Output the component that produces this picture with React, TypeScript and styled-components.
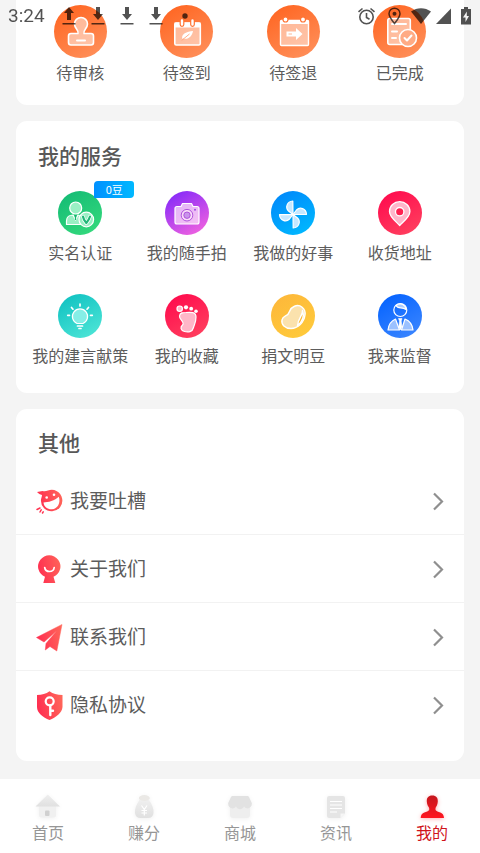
import React from "react";
import styled, { createGlobalStyle, css } from "styled-components";

const GlobalStyle = createGlobalStyle`
  *, *::before, *::after { box-sizing: border-box; }
  body {
    margin: 0;
    background: #f4f4f4;
    color: #5c5c5c;
    font-family: "Noto Sans CJK SC", "Noto Sans", sans-serif;
  }
  button { font: inherit; color: inherit; border: 0; background: none; padding: 0; cursor: pointer; }
  a { color: inherit; text-decoration: none; }
  svg { display: block; }
`;

const Page = styled.div`
  display: flex;
  flex-direction: column;
  min-height: 100vh;
`;

const StatusBar = styled.div`
  position: fixed;
  inset: 0 0 auto 0;
  z-index: 2;
  display: flex;
  justify-content: space-between;
  align-items: center;
  height: 32px;
  padding: 0 4px 0 8px;
  color: rgba(0, 0, 0, 0.68);
  pointer-events: none;
`;

const StatusGroup = styled.div<{ $gap: number }>`
  display: flex;
  align-items: center;
  gap: ${(p) => p.$gap}px;
`;

const Clock = styled.time`
  font: 400 19px/32px Roboto, sans-serif;
  margin-right: 2px;
`;

const Main = styled.main`
  flex: 1;
  display: flex;
  flex-direction: column;
  gap: 16px;
  padding: 0 16px 16px;
`;

const Card = styled.section<{ $variant: "status" | "service" | "list" }>`
  background: #fff;
  border-radius: 11px;
  ${(p) =>
    p.$variant === "status" &&
    css`
      padding: 5px 11px 21px;
      border-top-left-radius: 0;
      border-top-right-radius: 0;
    `}
  ${(p) =>
    p.$variant === "service" &&
    css`
      padding: 18px 11px 26px;
    `}
  ${(p) =>
    p.$variant === "list" &&
    css`
      padding: 17px 0 23px;
    `}
`;

const CardTitle = styled.h2<{ $inset: number }>`
  margin: 0 0 0 ${(p) => p.$inset}px;
  font-size: 21px;
  line-height: 32px;
  font-weight: 500;
  color: #585858;
`;

const TileGrid = styled.div<{ $top?: number }>`
  display: grid;
  grid-template-columns: repeat(4, minmax(0, 1fr));
  row-gap: 30px;
  margin-top: ${(p) => p.$top ?? 0}px;
`;

const Tile = styled.button<{ $gap: number }>`
  display: flex;
  flex-direction: column;
  align-items: center;
  gap: ${(p) => p.$gap}px;
  font-size: 16px;
  line-height: 24px;
  white-space: nowrap;
`;

const Disc = styled.span<{ $size: number; $from: string; $to: string }>`
  position: relative;
  width: ${(p) => p.$size}px;
  height: ${(p) => p.$size}px;
  border-radius: 50%;
  background: linear-gradient(150deg, ${(p) => p.$from}, ${(p) => p.$to});
`;

const Badge = styled.span`
  position: absolute;
  left: 36px;
  top: -10px;
  width: 40px;
  border-radius: 4px 3px 4px 0;
  background: linear-gradient(90deg, #0090ff, #00b8ff);
  color: #fff;
  font-size: 11px;
  line-height: 17px;
  text-align: center;
`;

const List = styled.ul`
  list-style: none;
  margin: 9px 0 0;
  padding: 0;
`;

const ListItem = styled.li`
  & + & {
    border-top: 1px solid #f2f2f2;
  }
`;

const ListButton = styled.button`
  display: flex;
  align-items: center;
  gap: 6px;
  width: 100%;
  height: 67px;
  padding: 0 20px;
  font-size: 19px;
  line-height: 28px;
  text-align: left;
`;

const ListLabel = styled.span`
  flex: 1;
  padding-bottom: 2px;
`;

const TabBar = styled.nav`
  position: sticky;
  bottom: 0;
  display: grid;
  grid-template-columns: repeat(5, 1fr);
  padding: 13px 0 9px;
  background: #fff;
`;

const Tab = styled.a<{ $active?: boolean }>`
  display: flex;
  flex-direction: column;
  align-items: center;
  font-size: 16px;
  line-height: 24px;
  color: ${(p) => (p.$active ? "#d0131b" : "#969696")};
`;

const TabIcon = styled.svg<{ $active?: boolean }>`
  width: 28px;
  height: 28px;
  overflow: visible;
  filter: drop-shadow(0 1px 2px ${(p) => (p.$active ? "rgba(255,30,40,.35)" : "rgba(0,0,0,.06)")});
`;

const soft = "rgba(255,255,255,.5)";

const tileArt: Record<string, React.ReactNode> = {
  stamp: (
    <g fill={soft} stroke="#fff" strokeWidth="1.6" strokeLinejoin="round">
      <path d="M24 28.500C25 25 20.500 23.500 20.500 19A6.500 6.500 0 0 1 33.500 19C33.500 23.500 29 25 30 28.500H37Q39.500 28.500 39.500 31V37.500Q39.500 40 37 40H17Q14.500 40 14.500 37.500V31Q14.500 28.500 17 28.500Z" />
      <path d="M23 35.500H31" strokeWidth="2" strokeLinecap="round" />
    </g>
  ),
  leaf: (
    <g>
      <rect x="14.800" y="18" width="25.500" height="22" rx="1.500" fill={soft} stroke="#fff" strokeWidth="1.600" />
      <path d="M14.500 17.500H40.500V22.500H14.500Z" fill="#fff" />
      <path d="M22 15.500V19.500M32.500 15.500V19.500" stroke="#ff7332" strokeWidth="4.800" strokeLinecap="round" />
      <path d="M22 15.500V19.500M32.500 15.500V19.500" stroke="#fff" strokeWidth="2.400" strokeLinecap="round" />
      <path d="M22.500 34C20.500 29 27 26.500 33 26C32 31.500 28 35 23.500 33.500L21 36" fill="#fff" />
      <path d="M21.500 35.500L29.500 29" stroke="#ff9a6c" strokeWidth=".8" />
    </g>
  ),
  exit: (
    <g>
      <rect x="13.500" y="15.500" width="28" height="25" rx="1" fill={soft} stroke="#fff" strokeWidth="1.400" />
      <path d="M13.500 15.500H41.500V19H13.500Z" fill="#fff" />
      <circle cx="18.500" cy="14.500" r="2.500" fill="#fff" stroke="#ff7332" strokeWidth="1.200" />
      <circle cx="36" cy="14.500" r="2.500" fill="#fff" stroke="#ff7332" strokeWidth="1.200" />
      <path d="M19.500 26.500H29V23L35.500 29L29 35V31.500H19.500Z" fill="#fff" />
      <path d="M21.500 29H25" stroke="#ffb896" strokeWidth="1" />
    </g>
  ),
  done: (
    <g stroke="#fff" strokeLinecap="round" strokeLinejoin="round" fill="none">
      <rect x="14.800" y="13.500" width="22.500" height="26" rx="2" fill={soft} strokeWidth="1.600" />
      <path d="M19 19H33M19 26.500H24M19 33H23" strokeWidth="2" />
      <circle cx="35" cy="33" r="8.500" fill="#ffab85" strokeWidth="1.600" />
      <path d="M31.500 33L34 35.500L38.500 30.500" strokeWidth="2" />
    </g>
  ),
  verify: (
    <g fill="#9af0c4" stroke="#fff" strokeWidth="1.200" strokeLinejoin="round">
      <circle cx="17.700" cy="17" r="6" />
      <path d="M8.500 33.500V30C8.500 26 11.500 24 15 24L17.500 29L20 24C24 24 26 27 26 33.500Z" />
      <path d="M17.500 24V29" stroke="#15b56e" />
      <circle cx="28.300" cy="28.500" r="7.300" />
      <path d="M25 25.500Q25.500 29 28.300 32Q31 29 32 25.500" fill="none" stroke="#fff" strokeWidth="3.600" strokeLinecap="round" />
      <path d="M25 25.500Q25.500 29 28.300 32Q31 29 32 25.500" fill="none" stroke="#20b878" strokeWidth="2.200" strokeLinecap="round" />
    </g>
  ),
  camera: (
    <g fill="rgba(255,235,250,.7)" stroke="#fff" strokeWidth="1.200" strokeLinejoin="round">
      <path d="M12 15.500H16L17.500 12.500H26.500L28 15.500H32Q34 15.500 34 17.500V31Q34 33 32 33H12Q10 33 10 31V17.500Q10 15.500 12 15.500Z" />
      <circle cx="22" cy="24.200" r="5.800" stroke="#b054dd" strokeWidth="1" />
      <circle cx="22" cy="24.200" r="3.200" fill="#c994ea" stroke="#b054dd" strokeWidth="1" />
      <circle cx="30" cy="18.700" r="1" fill="#a044e8" stroke="none" />
    </g>
  ),
  windmill: (
    <g fill="#c5e7ff" stroke="#fff" strokeWidth="1.200" strokeLinejoin="round">
      {[0, 90, 180, 270].map((a) => (
        <path key={a} d="M22 23.500L21.800 10C16 10.500 14 16.500 17.500 20Z" transform={`rotate(${a} 22 23.500)`} />
      ))}
    </g>
  ),
  pin: (
    <g stroke="#fff" strokeWidth="1.300" strokeLinejoin="round">
      <path d="M21.700 34.500C18 30.500 11.500 26 11.500 20.500A10.200 9.800 0 0 1 31.900 20.500C31.900 26 25.500 30.500 21.700 34.500Z" fill="#ffb6ca" />
      <circle cx="21.700" cy="20.700" r="4.200" fill="#ff2050" />
    </g>
  ),
  bulb: (
    <g stroke="#fff" strokeLinecap="round" strokeLinejoin="round">
      <path d="M19 29.500A7.600 7.600 0 1 1 25 29.500Z" fill="#85eee6" strokeWidth="1.200" />
      <path d="M19.500 32H24.500M21 34.500H23M22 10V12M13.500 13.500L15 15.200M30.500 13.500L29 15.200M9.700 21.300H11.500M32.500 21.300H34.300" strokeWidth="1.700" />
    </g>
  ),
  foot: (
    <g fill="#ffb6c8" stroke="#fff" strokeWidth="1.200">
      <circle cx="14.700" cy="14.700" r="2.700" />
      <g fill="#fff" stroke="none">
        <circle cx="21" cy="13.300" r="2.100" />
        <circle cx="26.200" cy="14.700" r="1.900" />
        <circle cx="31" cy="17.200" r="1.800" />
      </g>
      <path d="M14.500 22C15 18.500 18 18.500 21 18.500C26 18 31 18 31 23C31 28 29.500 30 28.500 33.500C27.500 38 23 38.500 19.500 37.500C15.500 36.500 15 33 17.500 31C20.500 28.500 14 25.500 14.500 22Z" />
    </g>
  ),
  bean: (
    <g stroke="#fff" strokeWidth="1.400" strokeLinejoin="round">
      <path d="M23 12.500C29 9.500 35 14.500 34 21C33 28.500 27 34.500 20 34.500C14 34.500 10 30.500 11 26C12 21 17 23 18.500 17.500C19.500 14.500 20.500 13.500 23 12.500Z" fill="#fbe2ad" />
      <path d="M31.500 16.500C32 21.500 27 24.500 26.500 31.500C31 28 33.500 22.500 31.500 16.500Z" fill="#fdb62d" />
    </g>
  ),
  officer: (
    <g stroke="#fff" strokeWidth="1.200" strokeLinejoin="round" fill="none">
      <circle cx="22.300" cy="16" r="6.500" />
      <path d="M18 11.500C20 15.500 24 12.500 28 15.500C27.500 11 23 8 18 11.500Z" fill="#a9cbff" />
      <path d="M10 36C10.500 31 13 27 17.500 25L21.500 36Z" fill="#9bc1ff" />
      <path d="M35 36C34.500 31 32 27 27 25L23.500 36Z" fill="#9bc1ff" />
      <path d="M20.500 24.500H24L23.200 27L24 33L22.300 36L20.800 33L21.500 27Z" fill="#fff" strokeWidth=".6" />
    </g>
  ),
};

type TileData = { label: string; art: string; from: string; to: string; badge?: string };

const progress: TileData[] = [
  { label: "待审核", art: "stamp", from: "#ff621d", to: "#ff935f" },
  { label: "待签到", art: "leaf", from: "#ff621d", to: "#ff935f" },
  { label: "待签退", art: "exit", from: "#ff621d", to: "#ff935f" },
  { label: "已完成", art: "done", from: "#ff621d", to: "#ff935f" },
];

const services: TileData[] = [
  { label: "实名认证", art: "verify", from: "#12b974", to: "#37dc7d", badge: "0豆" },
  { label: "我的随手拍", art: "camera", from: "#7b25fb", to: "#fb68dd" },
  { label: "我做的好事", art: "windmill", from: "#0084fa", to: "#00bdff" },
  { label: "收货地址", art: "pin", from: "#ff064c", to: "#ff4560" },
  { label: "我的建言献策", art: "bulb", from: "#0bbfc0", to: "#52e8d8" },
  { label: "我的收藏", art: "foot", from: "#ff064c", to: "#ff4560" },
  { label: "捐文明豆", art: "bean", from: "#fdb63a", to: "#ffcc3b" },
  { label: "我来监督", art: "officer", from: "#0060ff", to: "#4089ff" },
];

function Tiles({ items, size, gap, top }: { items: TileData[]; size: number; gap: number; top?: number }) {
  return (
    <TileGrid $top={top}>
      {items.map((t) => (
        <Tile key={t.label} type="button" $gap={gap}>
          <Disc $size={size} $from={t.from} $to={t.to}>
            <svg width={size} height={size} viewBox={`0 0 ${size} ${size}`} aria-hidden="true">
              {tileArt[t.art]}
            </svg>
            {t.badge && <Badge>{t.badge}</Badge>}
          </Disc>
          {t.label}
        </Tile>
      ))}
    </TileGrid>
  );
}

const listItems = [
  {
    label: "我要吐槽",
    art: (
      <>
        <path d="M1 5L6.500 4C9 4.500 10 4 12 3.500A10.700 10.700 0 1 1 5 12.500C5.500 10.500 6 9 6 8Q3 7.500 1 5Z" fill="url(#warm)" />
        <path d="M7.500 15.500C12 15.500 19 13.500 22.800 9.800C25 16 21.500 22 16 22.300C11.500 22.500 8 20 7.500 15.500Z" fill="#fff" />
        <circle cx="10.700" cy="10.500" r="1.300" fill="#fff" />
        <circle cx="18" cy="7.700" r="1.300" fill="#fff" />
        <path d="M1 22.500L4 21M4 25L5.200 22.800M6.500 26L7.200 24.800" stroke="#ff3552" strokeWidth="1.500" strokeLinecap="round" />
      </>
    ),
  },
  {
    label: "关于我们",
    art: (
      <>
        <path d="M9 21.800A11.200 11.200 0 1 1 17.500 21.800L19.300 28H7.300Z" fill="url(#warm)" />
        <path d="M8.700 12.500C9.500 17.800 17.500 17.800 18.200 12.500" fill="none" stroke="#fff" strokeWidth="1.700" strokeLinecap="round" />
      </>
    ),
  },
  {
    label: "联系我们",
    art: (
      <path d="M26 1.500L.500 14.500L8 19L20.500 8L10 20.500L9.300 27L14 23.500L20.800 28Z" fill="url(#warm)" stroke="url(#warm)" strokeWidth=".5" strokeLinejoin="round" />
    ),
  },
  {
    label: "隐私协议",
    art: (
      <>
        <path d="M13.500 .300C17 3 21 4 26.500 4V16C26 22 20 26.500 13.500 29C7 26.500 1 22 1 16V4C6 4 10 3 13.500 .300Z" fill="url(#warm)" />
        <circle cx="13.700" cy="10.300" r="4" fill="none" stroke="#fff" strokeWidth="2.200" />
        <path d="M14.300 14.500V24M14.500 19.800H17" stroke="#fff" strokeWidth="2.400" strokeLinecap="round" />
      </>
    ),
  },
];

const tabs = [
  {
    label: "首页",
    art: (
      <>
        <path d="M5 14H22V23Q22 25.500 19.500 25.500H7.500Q5 25.500 5 23Z" fill="#f0f0f0" />
        <path d="M13.800 2.500L26 14.500H1.500Z" fill="url(#gray)" />
        <rect x="11" y="18.500" width="4.500" height="5.500" rx="1" fill="#d0d0d0" />
      </>
    ),
  },
  {
    label: "赚分",
    art: (
      <>
        <path d="M9.500 8H19C22 12 24 17 23.500 21Q23 26 18 26H10.500Q5.500 26 5 21C4.500 17 6.500 12 9.500 8Z" fill="url(#gray)" />
        <ellipse cx="14.300" cy="6" rx="5.500" ry="3" fill="#ebe9e6" />
        <path d="M11.500 13.500L14.300 17.500L17 13.500M14.300 17.500V23.500M11.500 18.500H17M11.500 21H17" stroke="#fff" strokeWidth="1.200" fill="none" />
      </>
    ),
  },
  {
    label: "商城",
    art: (
      <>
        <path d="M4 15H24V23Q24 26 21 26H7Q4 26 4 23Z" fill="#eee" />
        <path d="M6.500 4H21.500Q22.500 4 23 5L25.800 11C26.500 16.500 20.500 18 18 14.500C16 18 12 18 10 14.500C7.500 18 1.500 16.500 2.200 11L5 5Q5.500 4 6.500 4Z" fill="#e2e2e2" />
      </>
    ),
  },
  {
    label: "资讯",
    art: (
      <>
        <path d="M7 4H21Q23 4 23 6V21.500L18.500 26H7Q5 26 5 24V6Q5 4 7 4Z" fill="#e5e5e5" />
        <path d="M8 9.500H20M8 13H20M8 16.500H20M8 20H15" stroke="#fff" strokeWidth="1.200" />
        <path d="M18.500 26V21.500H23Z" fill="#f6f6f6" />
      </>
    ),
  },
  {
    label: "我的",
    active: true,
    art: (
      <path d="M14.300 3.500C18.300 3.500 20 6 19.800 9.500C19.600 13 18.300 14.500 17.500 16V18C19 20.500 26 19.500 26 26H2.700C2.700 19.500 9.700 20.500 11.200 18V16C10.300 14.500 9 13 8.800 9.500C8.600 6 10.300 3.500 14.300 3.500Z" fill="url(#red)" />
    ),
  },
];

function Download({ up = false }: { up?: boolean }) {
  return (
    <svg width="14" height="18" viewBox="0 0 14 18" fill="currentColor" aria-hidden="true">
      <path d={up ? "M7 0L12 6H9V13H5V6H2Z" : "M5 0H9V7H12L7 13L2 7H5Z"} />
      <rect x=".5" y="16" width="13" height="1.500" />
    </svg>
  );
}

export default function App() {
  return (
    <Page>
      <GlobalStyle />
      <StatusBar>
        <StatusGroup $gap={15}>
          <Clock>3:24</Clock>
          <Download up />
          <Download />
          <Download />
          <Download />
          <svg width="14" height="18" viewBox="0 0 14 18" aria-hidden="true">
            <circle cx="7" cy="9" r="2.700" fill="currentColor" />
          </svg>
        </StatusGroup>
        <StatusGroup $gap={3}>
          <svg width="25" height="18" viewBox="0 0 25 18" fill="none" stroke="currentColor" strokeWidth="1.600" aria-hidden="true">
            <circle cx="12.500" cy="10" r="6.700" />
            <path d="M12.500 6V10.500L15.500 12.200M4.500 4.800L8.500 1.500M20.500 4.800L16.500 1.500" />
          </svg>
          <svg width="25" height="18" viewBox="0 0 25 18" fill="none" stroke="currentColor" strokeWidth="1.500" aria-hidden="true">
            <path d="M12.500 16.500C9.500 12.800 7 9.500 7 6.700A5.500 5.500 0 0 1 18 6.700C18 9.500 15.500 12.800 12.500 16.500Z" />
            <circle cx="12.500" cy="6.700" r="2" fill="currentColor" stroke="none" />
          </svg>
          <svg width="22" height="18" viewBox="0 0 22 18" fill="currentColor" aria-hidden="true">
            <path d="M1 4.500C7 0 15 0 21 4.500L11 17Z" />
          </svg>
          <svg width="18" height="18" viewBox="0 0 18 18" fill="currentColor" aria-hidden="true">
            <path d="M16 1.500V17H1Z" />
          </svg>
          <svg width="20" height="18" viewBox="0 0 20 18" fill="currentColor" aria-hidden="true">
            <path fillRule="evenodd" d="M8 0H12V2H15V17.500H5V2H8ZM10.800 4.500L7 10.500H9.500V15L13 9H10.800Z" />
          </svg>
        </StatusGroup>
      </StatusBar>

      <Main>
        <Card $variant="status">
          <Tiles items={progress} size={53} gap={2} />
        </Card>

        <Card $variant="service">
          <CardTitle $inset={11}>我的服务</CardTitle>
          <Tiles items={services} size={44} gap={5} top={20} />
        </Card>

        <Card $variant="list">
          <CardTitle $inset={22}>其他</CardTitle>
          <List>
            {listItems.map((item) => (
              <ListItem key={item.label}>
                <ListButton type="button">
                  <svg width="28" height="30" viewBox="0 -1 28 30" aria-hidden="true">
                    <defs>
                      <linearGradient id="warm" gradientUnits="userSpaceOnUse" x1="0" y1="14" x2="27" y2="8">
                        <stop offset="0" stopColor="#ff2c50" />
                        <stop offset="1" stopColor="#ff685a" />
                      </linearGradient>
                    </defs>
                    {item.art}
                  </svg>
                  <ListLabel>{item.label}</ListLabel>
                  <svg width="12" height="20" viewBox="0 0 12 20" fill="none" stroke="#8f8f8f" strokeWidth="2.200" aria-hidden="true">
                    <path d="M2 2.500L10 10.500L2 18.500" />
                  </svg>
                </ListButton>
              </ListItem>
            ))}
          </List>
        </Card>
      </Main>

      <TabBar>
        {tabs.map((t) => (
          <Tab key={t.label} href="#" $active={t.active} aria-current={t.active ? "page" : undefined}>
            <TabIcon viewBox="0 0 28 28" $active={t.active} aria-hidden="true">
              <defs>
                <linearGradient id="gray" x1="0" y1="0" x2="0" y2="1">
                  <stop offset="0" stopColor="#efefef" />
                  <stop offset="1" stopColor="#e0e0e0" />
                </linearGradient>
                <linearGradient id="red" x1="0" y1="0" x2="0" y2="1">
                  <stop offset="0" stopColor="#c5161d" />
                  <stop offset="1" stopColor="#ff1620" />
                </linearGradient>
              </defs>
              {t.art}
            </TabIcon>
            {t.label}
          </Tab>
        ))}
      </TabBar>
    </Page>
  );
}
